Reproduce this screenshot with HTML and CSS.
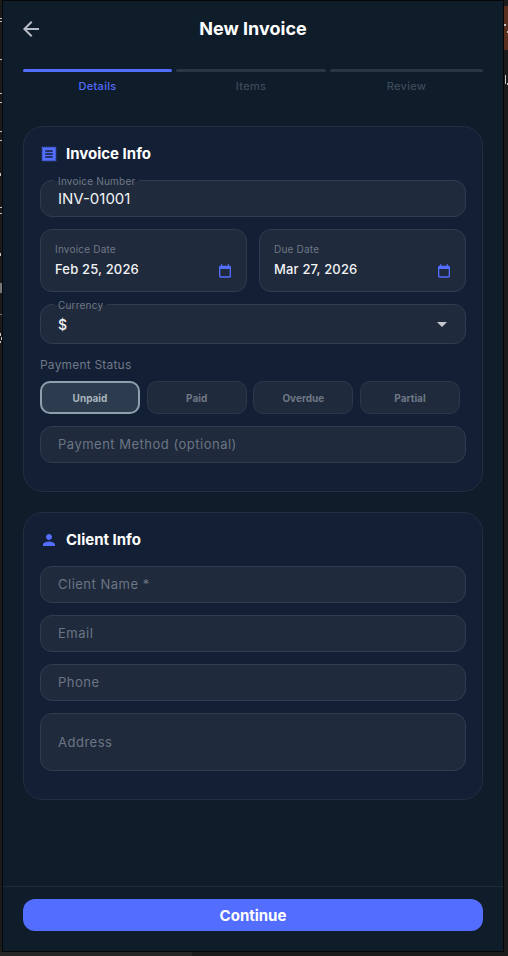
FILE: index.html
```html
<!DOCTYPE html>
<html lang="en">

<head>
    <meta charset="UTF-8">
    <meta name="viewport" content="width=device-width, initial-scale=1.0">
    <title>New Invoice</title>
    <link rel="stylesheet" href="styles.css">
</head>

<body>

    <!-- Bits of the window behind the app -->
    <div class="behind-block"></div>
    <div class="behind-floor"></div>
    <svg class="behind-marks" viewBox="0 0 508 956">
        <path d="M0 18h2v1H0zM0 21h2v1H0zM0 59h2v1H0zM0 93h2v1H0zM0 102h2v1H0zM0 131h2v1H0zM0 140h2v1H0zM0 173h1v3H0zM0 207h2v1H0zM0 213h2v1H0zM0 253h1v3H0zM0 333h1v3H0zM1 337h1v3H1zM0 341h1v2H0z"/>
        <path d="M504 24h2v2h-2zM507 31h1v2h-1zM505 75h1v9h-1zM507 83h1v2h-1z"/>
        <path class="mark-dim" d="M0 283h2v10H0zM0 314h2v1H0z"/>
    </svg>

    <div class="app">
        <header class="top-bar">
            <svg class="back-icon" viewBox="0 0 24 24"><path d="M20 11H7.83l5.59-5.59L12 4l-8 8 8 8 1.41-1.41L7.83 13H20v-2z"/></svg>
            <h1>New Invoice</h1>
        </header>

        <div class="steps">
            <div class="step active"><span class="step-bar"></span><span class="step-label">Details</span></div>
            <div class="step"><span class="step-bar"></span><span class="step-label">Items</span></div>
            <div class="step"><span class="step-bar"></span><span class="step-label">Review</span></div>
        </div>

        <main class="content">
            <!-- Invoice Info -->
            <section class="card">
                <h2 class="card-title">
                    <svg class="card-icon" viewBox="0 0 24 24">
                        <path d="M3 3v18h18V3H3zm14 14H7v-2h10v2zm0-4H7v-2h10v2zm0-4H7V7h10v2z"/>
                        <rect class="card-icon-edge" x="2.6" y="2.6" width="18.8" height="18.8"/>
                    </svg>
                    Invoice Info
                </h2>

                <div class="field field-number">
                    <span class="float-label">Invoice Number</span>
                    <span class="value">INV-01001</span>
                </div>

                <div class="date-row">
                    <div class="field date-field">
                        <div>
                            <span class="date-label">Invoice Date</span>
                            <span class="date-value">Feb 25, 2026</span>
                        </div>
                        <svg class="calendar-icon" viewBox="0 0 24 24"><path d="M19 4h-1V2h-2v2H8V2H6v2H5c-1.1 0-2 .9-2 2v14c0 1.1.9 2 2 2h14c1.1 0 2-.9 2-2V6c0-1.1-.9-2-2-2zm0 16H5V9h14v11z"/></svg>
                    </div>
                    <div class="field date-field">
                        <div>
                            <span class="date-label">Due Date</span>
                            <span class="date-value">Mar 27, 2026</span>
                        </div>
                        <svg class="calendar-icon" viewBox="0 0 24 24"><path d="M19 4h-1V2h-2v2H8V2H6v2H5c-1.1 0-2 .9-2 2v14c0 1.1.9 2 2 2h14c1.1 0 2-.9 2-2V6c0-1.1-.9-2-2-2zm0 16H5V9h14v11z"/></svg>
                    </div>
                </div>

                <div class="field field-currency">
                    <span class="float-label">Currency</span>
                    <span class="value">$</span>
                    <span class="caret"></span>
                </div>

                <p class="status-label">Payment Status</p>
                <div class="chips">
                    <span class="chip selected">Unpaid</span>
                    <span class="chip">Paid</span>
                    <span class="chip">Overdue</span>
                    <span class="chip">Partial</span>
                </div>

                <div class="field field-input">Payment Method (optional)</div>
            </section>

            <!-- Client Info -->
            <section class="card">
                <h2 class="card-title">
                    <svg class="card-icon" viewBox="0 0 24 24"><path d="M12 12c2.21 0 4-1.79 4-4s-1.79-4-4-4-4 1.79-4 4 1.79 4 4 4zm0 2c-2.67 0-8 1.34-8 4v2h16v-2c0-2.66-5.33-4-8-4z"/></svg>
                    Client Info
                </h2>

                <div class="client-fields">
                    <div class="field field-input">Client Name *</div>
                    <div class="field field-input">Email</div>
                    <div class="field field-input">Phone</div>
                    <div class="field field-input field-address">Address</div>
                </div>
            </section>
        </main>

        <footer class="bottom-bar">
            <button type="button" class="continue-button">Continue</button>
        </footer>
    </div>

</body>

</html>
```

FILE: styles.css
```css
* {
    margin: 0;
    padding: 0;
    box-sizing: border-box;
    font-family: Inter, "Noto Sans", sans-serif;
}

body {
    position: relative;
    width: 508px;
    height: 956px;
    overflow: hidden;
    background: #1b1b1b;
}

.behind-block {
    position: absolute;
    top: 6px;
    left: 504px;
    width: 4px;
    height: 44px;
    background: #5a2f1e;
}

.behind-floor {
    position: absolute;
    top: 952px;
    left: 0;
    width: 192px;
    height: 4px;
    background: #262626;
}

.behind-marks {
    position: absolute;
    top: 0;
    left: 0;
    width: 508px;
    height: 956px;
    fill: #c4c4c4;
}

.mark-dim {
    fill: #77797b;
}

/* App window */
.app {
    position: relative;
    display: flex;
    flex-direction: column;
    width: 502px;
    height: 952px;
    margin-left: 2px;
    border: 1px solid #050608;
    background: #0f1c2a;
}

.top-bar {
    position: relative;
    display: flex;
    align-items: center;
    justify-content: center;
    height: 54px;
    flex-shrink: 0;
}

.top-bar h1 {
    font-size: 18px;
    font-weight: 700;
    color: #fff;
}

.back-icon {
    position: absolute;
    left: 16px;
    top: 16px;
    width: 24px;
    height: 24px;
    fill: #b9bec6;
}

/* Stepper */
.steps {
    display: flex;
    gap: 4px;
    padding: 14px 20px 0;
}

.step {
    flex: 1;
    display: flex;
    flex-direction: column;
    align-items: center;
    gap: 8px;
}

.step:first-child {
    flex: 0 0 149px;
}

.step:last-child {
    flex: 0 0 153px;
}

.step-bar {
    width: 100%;
    height: 3px;
    border-radius: 2px;
    background: #2a3644;
}

.step-label {
    font-size: 11px;
    line-height: 13px;
    font-weight: 500;
    letter-spacing: 0.3px;
    color: #3f4a59;
}

.step.active .step-bar {
    background: #536dfe;
}

.step.active .step-label {
    color: #536dfe;
}

/* Cards */
.content {
    flex: 1;
    display: flex;
    flex-direction: column;
    gap: 20px;
    padding: 33px 20px 0;
}

.card {
    padding: 16px 16px 28px;
    border: 1px solid #222f42;
    border-radius: 20px;
    background: #131f35;
}

.card-title {
    display: flex;
    align-items: center;
    gap: 8px;
    height: 21px;
    margin-bottom: 16px;
    font-size: 15px;
    font-weight: 700;
    color: #fff;
}

.card-icon {
    width: 18px;
    height: 18px;
    fill: #536dfe;
}

.card-icon-edge {
    fill: none;
    stroke: #536dfe;
    stroke-width: 0.8;
    stroke-dasharray: 1.4;
}

/* Inputs */
.field {
    position: relative;
    display: flex;
    align-items: center;
    padding: 0 17px;
    border: 1px solid #303c4f;
    border-radius: 12px;
    background: #1f2a3c;
}

.float-label {
    position: absolute;
    top: -6px;
    left: 13px;
    padding: 0 4px;
    font-size: 10px;
    line-height: 12px;
    letter-spacing: 0.2px;
    color: #6f7885;
    background: linear-gradient(#131f35 50%, #1f2a3c 50%);
}

.value {
    font-size: 15px;
    color: #f2f3f5;
}

.field-number {
    height: 37px;
}

.date-row {
    display: flex;
    gap: 12px;
    margin-top: 12px;
}

.date-field {
    flex: 1;
    justify-content: space-between;
    height: 63px;
    padding: 0 13px 0 14px;
}

.date-label {
    display: block;
    font-size: 10px;
    line-height: 12px;
    letter-spacing: 0.2px;
    color: #6f7885;
    margin-bottom: 6px;
}

.date-value {
    display: block;
    font-size: 13px;
    line-height: 17px;
    font-weight: 500;
    letter-spacing: 0.17px;
    color: #f2f3f5;
}

.calendar-icon {
    width: 16px;
    height: 16px;
    margin-top: 20px;
    fill: #536dfe;
}

.field-currency {
    justify-content: space-between;
    height: 40px;
    margin-top: 12px;
    padding-right: 18px;
}

.field-currency .value {
    font-size: 14px;
    font-weight: 500;
}

.caret {
    width: 0;
    height: 0;
    border-left: 5px solid transparent;
    border-right: 5px solid transparent;
    border-top: 5px solid #c6c9ce;
}

.status-label {
    margin-top: 13px;
    font-size: 12px;
    line-height: 15px;
    letter-spacing: 0.2px;
    color: #6f7885;
}

/* Status chips */
.chips {
    display: flex;
    gap: 6.67px;
    margin-top: 9px;
}

.chip {
    display: flex;
    align-items: center;
    justify-content: center;
    width: 100px;
    height: 33px;
    border: 1px solid #2b384a;
    border-radius: 10px;
    background: #1f2a3c;
    font-size: 10px;
    font-weight: 700;
    color: #6f7885;
}

.chip.selected {
    border: 2px solid #8ea0ad;
    background: #2c3c4e;
    color: #a9b4bd;
}

.field-input {
    height: 37px;
    padding-bottom: 2px;
    font-size: 13px;
    letter-spacing: 0.5px;
    color: #6b7583;
}

.chips + .field-input {
    margin-top: 12px;
}

.client-fields {
    display: flex;
    flex-direction: column;
    gap: 12px;
}

.field-address {
    height: 58px;
    padding-bottom: 0;
}

/* Bottom bar */
.bottom-bar {
    padding: 12px 20px 20px;
    border-top: 1px solid #1f2b39;
}

.continue-button {
    display: block;
    width: 100%;
    height: 32px;
    border: none;
    border-radius: 12px;
    background: #536dfe;
    font-size: 15px;
    font-weight: 700;
    color: #fff;
}
```
